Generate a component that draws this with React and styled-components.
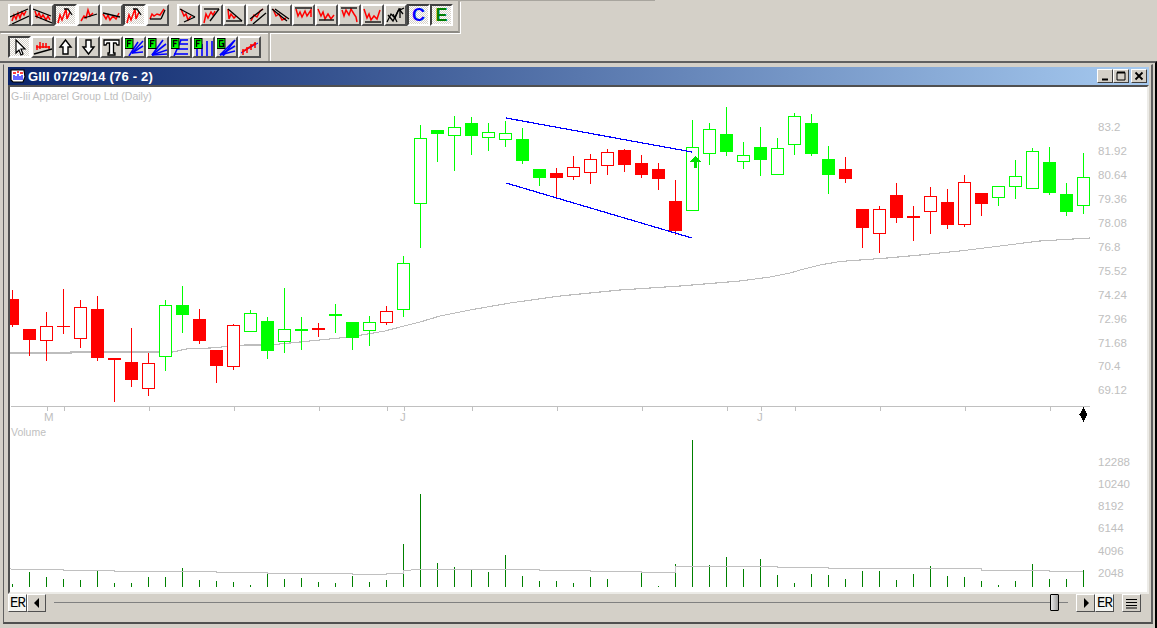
import React from "react";
import styled, { createGlobalStyle, css } from "styled-components";

const GlobalStyle = createGlobalStyle`
  html, body { margin: 0; padding: 0; background: #d4d0c8; }
  #root { width: 1157px; height: 628px; overflow: hidden; }
`;

const Page = styled.div`
  width: 1157px;
  height: 628px;
  display: flex;
  flex-direction: column;
  background: #d4d0c8;
  font-family: "Liberation Sans", Arial, sans-serif;
`;

const TopRule = styled.div`
  width: 655px;
  height: 1px;
  flex: none;
  background: #a8a59e;
`;

const Band = styled.div`
  height: ${(p) => p.$height}px;
  flex: none;
  box-sizing: border-box;
  display: flex;
  align-items: flex-start;
`;

const Toolbar = styled.div`
  display: flex;
  align-items: flex-start;
  box-sizing: border-box;
  height: ${(p) => p.$height}px;
  padding: ${(p) => p.$top}px 5px 0 8px;
  border-right: 2px solid #a8a59e;
  box-shadow: 1px 0 0 #fff;
  ${(p) => p.$ruled && "border-bottom: 2px solid #8c8a84; box-shadow: 1px 1px 0 #fff;"}
`;

const Gap = styled.div`
  width: ${(p) => p.$w}px;
`;

const pressedLook = css`
  background: repeating-conic-gradient(#d4d0c8 0 25%, #fff 0 50%) 0 0 / 2px 2px;
  border-color: #404040 #fff #fff #404040;
`;

const ToolButton = styled.div`
  width: 23px;
  height: 22px;
  box-sizing: border-box;
  display: flex;
  align-items: center;
  justify-content: center;
  overflow: hidden;
  background: #d4d0c8;
  border: 2px solid;
  border-color: #fff #505050 #505050 #fff;
  ${(p) => p.$pressed && pressedLook}
`;

const Letter = styled.span`
  font: bold 18px "Liberation Sans", Arial, sans-serif;
  line-height: 18px;
  color: ${(p) => p.$color};
`;

const Mdi = styled.div`
  flex: 1;
  min-height: 0;
  display: flex;
  box-sizing: border-box;
  border-top: 2px solid #606060;
  border-right: 2px solid #000;
  padding: 1px 2px 4px 3px;
`;

const Win = styled.div`
  flex: 1;
  display: flex;
  flex-direction: column;
  box-sizing: border-box;
  border: 1px solid #d4d0c8;
  border-left-color: #606060;
  border-right: 2px solid #606060;
  border-bottom: 2px solid #505050;
  padding: 2px 2px 0 4px;
`;

const TitleBar = styled.div`
  height: 18px;
  flex: none;
  display: flex;
  align-items: center;
  background: linear-gradient(90deg, #0a246a 0%, #a6caf0 100%);
  padding: 0 2px 0 2px;
`;

const TitleText = styled.span`
  margin-left: 2px;
  flex: 1;
  color: #fff;
  font: bold 13px "Liberation Sans", Arial, sans-serif;
  letter-spacing: 0.2px;
`;

const CaptionButton = styled.div`
  width: 16px;
  height: 14px;
  margin-left: ${(p) => p.$gap || 0}px;
  box-sizing: border-box;
  background: #d4d0c8;
  border: 1px solid;
  border-color: #fff #404040 #404040 #fff;
  display: flex;
  align-items: center;
  justify-content: center;
`;

const ChartFrame = styled.div`
  flex: 1;
  min-height: 0;
  border-top: 2px solid #505050;
  border-left: 2px solid #505050;
  border-right: 2px solid #ecebe7;
  border-bottom: 2px solid #ecebe7;
  background: #fff;
  display: flex;
`;

const ScrollRow = styled.div`
  height: 28px;
  flex: none;
  display: flex;
  align-items: flex-start;
  padding-right: 8px;
`;

const ScrollButton = styled.div`
  width: 19px;
  height: 18px;
  box-sizing: border-box;
  margin-left: ${(p) => p.$gap || 0}px;
  background: #d4d0c8;
  border: 1px solid;
  border-color: #fff #505050 #505050 #fff;
  display: flex;
  align-items: center;
  justify-content: center;
  font: 14px "Liberation Mono", "Courier New", monospace;
  letter-spacing: -1px;
  color: #000;
  ${(p) => p.$pale && "background: #f4f4f0;"}
`;

const Track = styled.div`
  position: relative;
  flex: 1;
  height: 18px;
  margin: 0 8px;
  &::before {
    content: "";
    position: absolute;
    left: 0;
    right: 0;
    top: 8px;
    height: 1px;
    background: #808080;
  }
`;

const Thumb = styled.div`
  position: absolute;
  right: 9px;
  top: 0;
  width: 9px;
  height: 17px;
  box-sizing: border-box;
  border: 1px solid #000;
  border-radius: 1px;
  background: linear-gradient(90deg, #e8e8e8, #a0a0a0);
`;

const AxisText = styled.text`
  font: ${(p) => (p.$small ? "10.5px" : "11.5px")} "Liberation Sans", Arial, sans-serif;
  fill: #c0c0c0;
`;

// each icon: red strokes, black strokes, blue strokes
const ROW1 = [
  { k: ["1,11 19,3", "3,18 20,10"], r: ["3,15 5,9 7,13 9,7 11,12 13,6 15,9 17,5"] },
  { k: ["1,3 19,10", "3,10 20,17"], r: ["3,5 5,11 7,7 9,12 11,9 14,14 16,10 18,14"] },
  { p: 1, r: ["3,17 5,9 7,14 11,3 12,13 15,6"], k: ["9,3 13,3 17,9"] },
  { k: ["6,12 19,8"], r: ["3,15 6,10 8,12 10,4 12,10 15,7"] },
  { k: ["2,7 19,11"], r: ["2,8 5,13 7,9 9,14 12,10 15,13 18,7"] },
  { p: 1, r: ["3,17 5,9 7,14 11,3 12,13 15,6"], k: ["9,3 13,3 17,9"] },
  { k: ["3,13 14,13", "14,13 18,4"], r: ["3,13 5,8 7,10 10,8 13,9 17,3"] },
];
const ROW1B = [
  { k: ["2,3 17,11", "6,16 17,11"], r: ["3,3 6,10 8,8 10,14 13,10"] },
  { k: ["3,3 18,3", "18,3 9,15"], r: ["3,17 5,8 7,12 10,6 12,9 14,5"] },
  { k: ["4,3 18,15", "2,15 18,15"], r: ["4,3 5,13 7,8 10,12 12,10"] },
  { k: ["3,13 16,3", "6,18 19,7"], r: ["4,15 7,9 10,11 13,5 16,3"] },
  { k: ["2,3 17,15", "5,3 19,13"], r: ["3,3 6,10 9,8 12,14 16,12"] },
  { k: ["2,2 19,2"], r: ["3,3 5,10 7,6 9,11 12,5 14,10 18,4 18,11"] },
  { k: ["3,14 18,14"], r: ["2,3 5,10 7,6 9,13 12,8 15,13 18,9"] },
  { k: ["2,2 18,2"], r: ["3,4 5,10 7,4 10,9 12,3 15,8 17,11 18,16"] },
  { k: ["3,16 19,16"], r: ["2,3 5,12 7,8 9,14 12,10 15,13 18,4"] },
  { k: ["2,16 6,8 10,12 14,3 18,8", "3,9 8,15 13,5 19,2", "8,8 12,16", "15,2 15,12"] },
];
const ROW2 = [
  { p: 1, cursor: 1 },
  { k: ["2,16 20,11"], r: ["5,12 5,7", "8,11 8,4", "11,10 11,5", "14,10 14,5", "17,11 17,8", "4,9 18,9"] },
  { arrow: "up" },
  { arrow: "down" },
  { letterT: 1 },
  { tag: "F", g: ["8,15 19,3", "8,15 19,8", "8,15 19,14", "5,18 14,4"] },
  { tag: "F", g: ["5,17 16,2", "5,17 19,6", "5,17 20,12", "5,17 20,16"] },
  { tag: "F", g: ["4,16 18,16", "6,11 18,11", "8,6 18,6", "10,2 18,2", "4,18 11,2"] },
  { tag: "F", g: ["4,6 4,18", "9,6 9,18", "14,3 14,18", "19,3 19,18"] },
  { tag: "G", g: ["4,17 18,3", "4,17 19,8", "4,17 19,13", "7,18 19,2"] },
  { g: ["2,15 19,5"], r: ["4,11 4,17", "8,9 8,15", "12,6 12,12", "16,4 16,10", "3,14 17,5"], thin: 1 },
];

const Strokes = ({ list, color, width }) =>
  (list || []).map((pts, i) => (
    <polyline key={i} points={pts} fill="none" stroke={color} strokeWidth={width} />
  ));

const ToolIcon = ({ icon }) => {
  if (icon.cursor) {
    return (
      <svg width="19" height="18" viewBox="0 0 19 18">
        <path d="M6 2 L6 15 L9 12 L11 17 L13 16 L11 11 L15 11 Z" fill="#fff" stroke="#000" strokeWidth="1.2" />
      </svg>
    );
  }
  if (icon.arrow) {
    const d = "M9.5 2 L15 9 L12 9 L12 16 L7 16 L7 9 L4 9 Z";
    return (
      <svg width="19" height="18" viewBox="0 0 19 18">
        <path
          d={d}
          fill="#fff"
          stroke="#000"
          strokeWidth="1.4"
          transform={icon.arrow === "down" ? "rotate(180 9.5 9)" : undefined}
        />
      </svg>
    );
  }
  if (icon.letterT) {
    return (
      <svg width="19" height="18" viewBox="0 0 19 18">
        <path d="M2 2 H17 V7 H15 L14 5 H11.5 V15 H13 V17 H6 V15 H7.5 V5 H5 L4 7 H2 Z" fill="#fff" stroke="#000" strokeWidth="1.3" />
      </svg>
    );
  }
  return (
    <svg width="21" height="19" viewBox="0 0 21 19" style={{ flex: "none" }}>
      <Strokes list={icon.g} color="#0000ff" width={icon.thin ? 1 : 1.6} />
      <Strokes list={icon.r} color="#ff0000" width="1.5" />
      <Strokes list={icon.k} color="#000" width="1.3" />
      {icon.tag && (
        <>
          <rect x="1" y="0.5" width="8" height="10" fill="#00ff00" stroke="#000" strokeWidth="1" />
          <path d={icon.tag === "F" ? "M3.5 9 V2.5 H7.5 M3.5 5.5 H6.5" : "M7.5 2.5 H3.5 V8.5 H7.5 V5.5 H5.5"} fill="none" stroke="#000" strokeWidth="1.4" />
        </>
      )}
    </svg>
  );
};

const AppIcon = () => (
  <svg width="16" height="16" viewBox="0 0 16 16" style={{ flex: "none" }}>
    <path d="M1 2 H14 L15 9 L13 14 H3 L1 12 Z" fill="#fff" stroke="#000" strokeWidth="1.2" />
    <path d="M3 5 H6 M7 4 H9 M10 5 H13" stroke="#ff0000" strokeWidth="1.4" />
    <path d="M4 7 V12 M6 8 V12 M8 6 V12 M10 8 V12 M12 7 V12" stroke="#0000ff" strokeWidth="1.2" />
  </svg>
);

// [type, bodyTop, bodyBottom, wickTop, wickBottom]; colour r/g, f = filled, h = hollow
const CANDLES = [
  ["rf", 299, 325, 290, 327], ["rf", 329, 340, 329, 356], ["rh", 326, 340, 312, 361],
  ["rf", 326, 327, 289, 334], ["rh", 307, 338, 300, 348], ["rf", 309, 358, 296, 361],
  ["rf", 358, 360, 358, 402], ["rf", 362, 380, 328, 387], ["rh", 363, 388, 353, 396],
  ["gh", 305, 356, 300, 371], ["gf", 305, 315, 286, 333], ["rf", 319, 341, 309, 344],
  ["rf", 350, 366, 350, 383], ["rh", 325, 366, 324, 370], ["gh", 313, 331, 310, 331],
  ["gf", 321, 351, 317, 359], ["gh", 329, 341, 288, 353], ["gf", 329, 331, 317, 350],
  ["rf", 328, 330, 323, 337], ["gf", 314, 316, 304, 333], ["gf", 322, 338, 322, 350],
  ["gh", 322, 330, 316, 346], ["rh", 311, 322, 306, 325], ["gh", 263, 309, 256, 317],
  ["gh", 138, 203, 125, 248], ["gf", 130, 134, 130, 162], ["gh", 127, 135, 116, 171],
  ["gf", 123, 136, 117, 155], ["gh", 132, 137, 123, 151], ["gh", 133, 139, 121, 147],
  ["gf", 139, 161, 128, 164], ["gf", 169, 178, 169, 186], ["rf", 173, 178, 168, 198],
  ["rh", 167, 176, 156, 180], ["rh", 159, 172, 154, 184], ["rh", 152, 165, 149, 175],
  ["rf", 150, 165, 149, 172], ["rf", 163, 175, 155, 178], ["rf", 169, 179, 163, 190],
  ["rf", 201, 231, 180, 235], ["gh", 147, 210, 120, 210], ["gh", 129, 153, 123, 165],
  ["gf", 134, 152, 107, 156], ["gh", 155, 161, 142, 169], ["gf", 147, 160, 127, 176],
  ["gh", 148, 174, 138, 174], ["gh", 116, 144, 113, 155], ["gf", 123, 154, 114, 156],
  ["gf", 159, 175, 146, 194], ["rf", 169, 179, 157, 183], ["rf", 209, 228, 209, 248],
  ["rh", 209, 233, 206, 253], ["rf", 195, 218, 183, 223], ["rf", 216, 218, 206, 241],
  ["rh", 196, 211, 187, 234], ["rf", 202, 225, 189, 229], ["rh", 182, 224, 175, 227],
  ["rf", 193, 204, 193, 216], ["gh", 186, 197, 186, 206], ["gh", 176, 186, 160, 199],
  ["gh", 151, 188, 148, 188], ["gf", 162, 193, 147, 195], ["gf", 194, 212, 183, 216],
  ["gh", 177, 205, 153, 214],
];

const VOLUMES = [
  584, 572, 577, 579, 580, 571, 583, 583, 577, 577, 568, 580, 581, 582, 585, 574,
  579, 578, 582, 583, 576, 582, 580, 544, 494, 563, 567, 570, 572, 555, 576, 581,
  581, 583, 577, 579, 0, 573, 586, 564, 440, 565, 557, 569, 559, 575, 583, 574,
  575, 579, 571, 571, 580, 574, 566, 576, 577, 581, 585, 581, 564, 579, 579, 570,
];

const PRICE_LABELS = [
  ["83.2", 127], ["81.92", 151], ["80.64", 175], ["79.36", 199], ["78.08", 223], ["76.8", 247],
  ["75.52", 271], ["74.24", 295], ["72.96", 319], ["71.68", 343], ["70.4", 366], ["69.12", 390],
];
const VOLUME_LABELS = [
  ["12288", 462], ["10240", 484], ["8192", 506], ["6144", 528], ["4096", 551], ["2048", 573],
];
const TICKS = [47, 64, 149, 234, 319, 387, 404, 472, 557, 642, 727, 761, 795, 880, 965, 1050];

const PRICE_MA =
  "10,353 71,353 71,352 173,352 186,349 210,348 245,345 270,345 300,342 350,337 385,331 400,327 420,322 440,316 470,310 510,303 560,296 620,290 680,286 740,281 770,277 790,273 802,269.5 820,265 840,261.5 860,260 887,258 920,255 960,251 1000,246 1040,241 1090,238";
const VOLUME_MA =
  "10,568.5 12,569.5 63,569.5 63,570.5 114,570.5 114,571.5 216,571.5 216,572.5 267,572.5 267,573.5 352,573.5 352,574.5 386,574.5 386,573.5 403,573.5 403,570.5 420,569.5 539,569.5 539,570.5 590,570.5 590,571.5 641,571.5 641,572.5 675,572.5 675,566.5 777,566.5 777,567.5 828,567.5 828,568.5 981,568.5 981,570.5 1049,570.5 1049,571.5 1083,571.5";

const Candle = ({ x, data }) => {
  const [type, top, bottom, wickTop, wickBottom] = data;
  const color = type[0] === "r" ? "#ff0000" : "#00ff00";
  const filled = type[1] === "f";
  const cx = x + 0.5;
  return (
    <g>
      <line x1={cx} x2={cx} y1={wickTop} y2={wickBottom} stroke={color} strokeWidth="1.3" />
      {filled ? (
        <rect x={Math.max(x - 6, 10)} y={top} width={x - 6 < 10 ? x + 7 - 10 : 13} height={bottom - top} fill={color} />
      ) : (
        <rect x={x - 5.5} y={top + 0.5} width="12" height={bottom - top} fill="#fff" stroke={color} strokeWidth="1.2" />
      )}
    </g>
  );
};

const Chart = () => (
  <svg width="1137" height="503" viewBox="10 87 1137 503" shapeRendering="crispEdges">
    <AxisText $small x="11" y="100">G-Iii Apparel Group Ltd (Daily)</AxisText>
    <AxisText $small x="11" y="436">Volume</AxisText>
    <AxisText x="44" y="421">M</AxisText>
    <AxisText x="400" y="421">J</AxisText>
    <AxisText x="757" y="421">J</AxisText>
    {PRICE_LABELS.map(([label, y]) => (
      <AxisText key={label} x="1098" y={y + 4}>{label}</AxisText>
    ))}
    {VOLUME_LABELS.map(([label, y]) => (
      <AxisText key={label} x="1098" y={y + 4}>{label}</AxisText>
    ))}

    <line x1="11" x2="1090" y1="406.5" y2="406.5" stroke="#c0c0c0" strokeWidth="1" />
    {TICKS.map((x) => (
      <line key={x} x1={x + 0.5} x2={x + 0.5} y1="406" y2="411" stroke="#c0c0c0" />
    ))}
    <path d="M1083.5 407 L1087.5 414.5 L1083.5 422 L1079.5 414.5 Z" fill="#000" />

    <polyline points={PRICE_MA} fill="none" stroke="#bdbdbd" strokeWidth="1.1" />
    {CANDLES.map((c, i) => (
      <Candle key={i} x={12 + 17 * i} data={c} />
    ))}

    <line x1="506" y1="118" x2="692" y2="152" stroke="#0000ff" strokeWidth="1.2" />
    <line x1="506" y1="183" x2="692" y2="238" stroke="#0000ff" strokeWidth="1.2" />
    <path d="M695 156 L701 162 L697 162 L697 168 L694 168 L694 162 L689 162 Z" fill="#00e000" />

    {VOLUMES.map((top, i) =>
      top ? (
        <line key={i} x1={12.5 + 17 * i} x2={12.5 + 17 * i} y1={top} y2="587" stroke="#008000" strokeWidth="1.2" />
      ) : null
    )}
    <polyline points={VOLUME_MA} fill="none" stroke="#c0c0c0" strokeWidth="1" />
  </svg>
);

const App = () => (
  <Page>
    <GlobalStyle />
    <TopRule />
    <Band $height={32}>
      <Toolbar $top={3} $height={32} $ruled>
        {ROW1.map((icon, i) => (
          <ToolButton key={i} $pressed={icon.p}><ToolIcon icon={icon} /></ToolButton>
        ))}
        <Gap $w={8} />
        {ROW1B.map((icon, i) => (
          <ToolButton key={i}><ToolIcon icon={icon} /></ToolButton>
        ))}
        <ToolButton $pressed><Letter $color="#0000ff">C</Letter></ToolButton>
        <ToolButton $pressed><Letter $color="#008000">E</Letter></ToolButton>
      </Toolbar>
    </Band>
    <Band $height={28}>
      <Toolbar $top={3} $height={28}>
        {ROW2.map((icon, i) => (
          <ToolButton key={i} $pressed={icon.p}><ToolIcon icon={icon} /></ToolButton>
        ))}
        <Gap $w={2} />
      </Toolbar>
    </Band>
    <Mdi>
      <Win>
        <TitleBar>
          <AppIcon />
          <TitleText>GIII 07/29/14 (76 - 2)</TitleText>
          <CaptionButton>
            <svg width="10" height="10" viewBox="0 0 10 10"><path d="M2 8.5 H8" stroke="#000" strokeWidth="2" /></svg>
          </CaptionButton>
          <CaptionButton>
            <svg width="10" height="10" viewBox="0 0 10 10"><path d="M1 1.5 H9 V9 H1 Z" fill="none" stroke="#000" /><path d="M1 1.5 H9" stroke="#000" strokeWidth="2" /></svg>
          </CaptionButton>
          <CaptionButton $gap={2}>
            <svg width="10" height="10" viewBox="0 0 10 10"><path d="M1.5 1.5 L8.5 8.5 M8.5 1.5 L1.5 8.5" stroke="#000" strokeWidth="1.8" /></svg>
          </CaptionButton>
        </TitleBar>
        <ChartFrame>
          <Chart />
        </ChartFrame>
        <ScrollRow>
          <ScrollButton $pale>ER</ScrollButton>
          <ScrollButton>
            <svg width="8" height="10" viewBox="0 0 8 10"><path d="M1 5 L6 0 V10 Z" fill="#000" /></svg>
          </ScrollButton>
          <Track><Thumb /></Track>
          <ScrollButton>
            <svg width="8" height="10" viewBox="0 0 8 10"><path d="M7 5 L2 0 V10 Z" fill="#000" /></svg>
          </ScrollButton>
          <ScrollButton $pale>ER</ScrollButton>
          <ScrollButton $gap={8}>
            <svg width="13" height="11" viewBox="0 0 13 11"><path d="M1 1.5 H12 M1 4.5 H12 M1 7.5 H12 M1 10 H12" stroke="#000" /></svg>
          </ScrollButton>
        </ScrollRow>
      </Win>
    </Mdi>
  </Page>
);

export default App;
